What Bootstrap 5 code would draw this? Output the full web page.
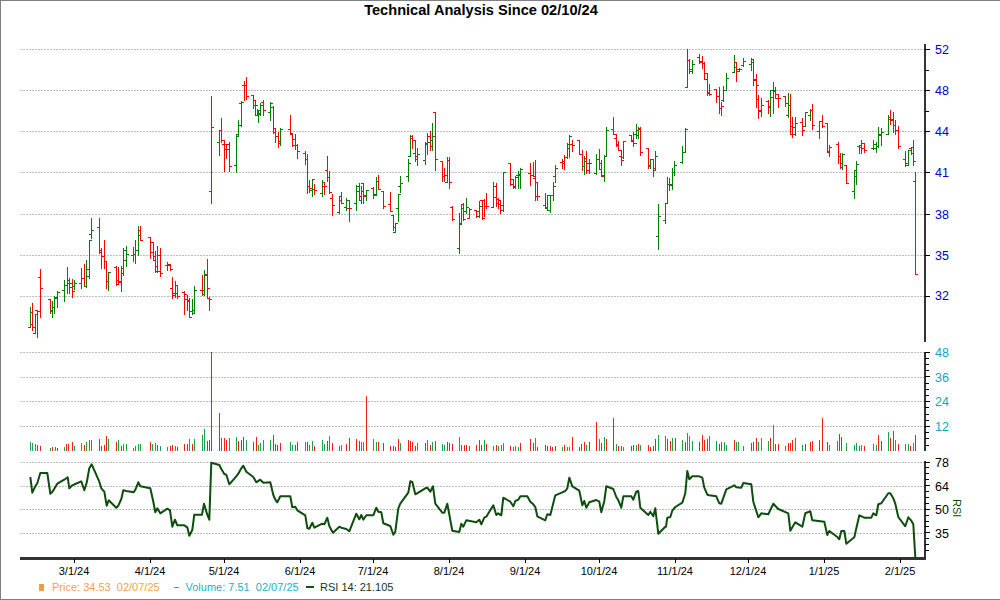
<!DOCTYPE html>
<html lang="en">
<head>
    <meta charset="UTF-8">
    <meta name="viewport" content="width=device-width, initial-scale=1.0">
    <title>Technical Analysis</title>
    <link href="https://cdn.jsdelivr.net/npm/bootstrap@5.3.0/dist/css/bootstrap.min.css" rel="stylesheet">
    <style>
        body {
            background-color: #fff;
            font-family: "Liberation Sans", Arial, sans-serif;
            overflow: hidden;
        }
        .chart-frame {
            width: 1000px;
            height: 600px;
            box-shadow: inset 1px 1px 0 #808080, inset 0 -1px 0 #808080;
        }
        .chart-title {
            height: 20px;
            line-height: 21px;
            font-size: 14.6px;
            color: #000;
            padding-right: 38px;
        }
        .chart-svg {
            display: block;
            width: 1000px;
            height: 560px;
        }
        .chart-svg text {
            font-family: "Liberation Sans", Arial, sans-serif;
        }
        .grid-line {
            stroke: #bdbdbd;
            stroke-width: 1;
            stroke-dasharray: 2 1;
        }
        .axis-bar {
            stroke: #333;
            stroke-width: 2.4;
        }
        .axis-tick {
            stroke: #000;
            stroke-width: 1;
        }
        .lbl-price { font-size: 12.5px; fill: #0000c8; }
        .lbl-vol { font-size: 12.5px; fill: #12a6bb; }
        .lbl-rsi { font-size: 12.5px; fill: #000; }
        .lbl-date { font-size: 11px; fill: #000; }
        .lbl-side { font-size: 11px; fill: #0d4d0d; }
        .legend-row {
            font-size: 11px;
            height: 14px;
            padding-left: 39px;
            white-space: pre;
        }
        .legend-price { color: #f5a14e; width: 121.5px; }
        .legend-vol { color: #17b3c4; width: 120.5px; }
        .legend-rsi { color: #12391a; }
        .swatch-price { width: 5px; height: 7px; background: #f59b37; margin-right: 8px; }
        .swatch-vol { width: 5px; height: 1px; background: #17b3c4; margin-right: 7px; }
        .swatch-rsi { width: 8px; height: 2px; background: #12501a; margin-right: 6px; }
    </style>
</head>
<body class="m-0">
    <div class="chart-frame d-flex flex-column">
        <div class="chart-title fw-bold text-center">Technical Analysis Since 02/10/24</div>
        <svg class="chart-svg" viewBox="0 20 1000 560" id="chart" shape-rendering="crispEdges">
            <g id="grid"></g>
            <g id="bars"></g>
            <g id="vols"></g>
            <polyline id="rsi" fill="none" stroke="#0d4d0d" stroke-width="2" stroke-linejoin="round" shape-rendering="auto" clip-path="url(#rsiClip)"></polyline>
            <clipPath id="rsiClip"><rect x="20" y="455" width="905" height="103"></rect></clipPath>
            <g id="axes"></g>

            <text class="lbl-price" x="935" y="54">52</text>
            <text class="lbl-price" x="935" y="95">48</text>
            <text class="lbl-price" x="935" y="136">44</text>
            <text class="lbl-price" x="935" y="177">41</text>
            <text class="lbl-price" x="935" y="219">38</text>
            <text class="lbl-price" x="935" y="260">35</text>
            <text class="lbl-price" x="935" y="300">32</text>

            <text class="lbl-vol" x="935" y="357">48</text>
            <text class="lbl-vol" x="935" y="382">36</text>
            <text class="lbl-vol" x="935" y="406">24</text>
            <text class="lbl-vol" x="935" y="431">12</text>

            <text class="lbl-rsi" x="935" y="467">78</text>
            <text class="lbl-rsi" x="935" y="491">64</text>
            <text class="lbl-rsi" x="935" y="514">50</text>
            <text class="lbl-rsi" x="935" y="538">35</text>
            <text class="lbl-side" transform="translate(953,499) rotate(90)">RSI</text>

            <text class="lbl-date" x="74" y="575" text-anchor="middle">3/1/24</text>
            <text class="lbl-date" x="150" y="575" text-anchor="middle">4/1/24</text>
            <text class="lbl-date" x="224" y="575" text-anchor="middle">5/1/24</text>
            <text class="lbl-date" x="300" y="575" text-anchor="middle">6/1/24</text>
            <text class="lbl-date" x="373" y="575" text-anchor="middle">7/1/24</text>
            <text class="lbl-date" x="449" y="575" text-anchor="middle">8/1/24</text>
            <text class="lbl-date" x="525" y="575" text-anchor="middle">9/1/24</text>
            <text class="lbl-date" x="599" y="575" text-anchor="middle">10/1/24</text>
            <text class="lbl-date" x="675" y="575" text-anchor="middle">11/1/24</text>
            <text class="lbl-date" x="748" y="575" text-anchor="middle">12/1/24</text>
            <text class="lbl-date" x="824" y="575" text-anchor="middle">1/1/25</text>
            <text class="lbl-date" x="900" y="575" text-anchor="middle">2/1/25</text>
        </svg>
        <div class="legend-row d-flex align-items-center">
            <span class="swatch-price"></span><span class="legend-price">Price: 34.53  02/07/25</span>
            <span class="swatch-vol"></span><span class="legend-vol">Volume: 7.51  02/07/25</span>
            <span class="swatch-rsi"></span><span class="legend-rsi">RSI 14: 21.105</span>
        </div>
    </div>

    <script>
        // all numbers below are read off the picture at 3x: x high low open close
        var priceData = [[0, `
g 91 922 983 983 937;r 98 910 992 973 983;g 106 943 1000 1000 943;r 113 931 1013 931 935;r 121 808 952 832 865
r 151 898 940 898 935;g 157 905 952 932 923;g 163 890 940 923 893;g 172 875 923 895 877
g 193 840 905 871 855;g 202 801 880 855 840;r 209 835 880 850 862;r 217 838 893 850 875;g 224 840 868 858 850
g 244 805 866 850 835;r 253 793 858 835 860;g 260 781 862 860 829;g 268 721 835 808 721;g 275 655 716 703 691
r 298 655 760 683 757;r 304 745 806 752 770;r 313 721 805 770 785;r 320 785 866 785 845;g 326 818 872 845 818
r 349 800 856 802 852;r 355 802 852 840 847;g 364 800 875 845 805;g 370 745 825 820 752;g 379 740 800 780 763
g 401 742 785 765 763;g 407 722 790 763 750;g 415 679 766 750 705;r 421 679 720 690 720
r 451 712 775 712 758;r 460 727 782 727 770;r 466 755 816 780 814;r 472 740 818 798 815;r 480 745 828 767 820
r 502 787 812 795 797;r 510 793 812 793 807;r 517 832 896 865 880;g 525 845 893 885 856;r 532 858 896 880 890
r 553 875 942 878 883;r 562 885 930 897 900;r 568 895 952 905 952;g 577 898 942 935 940;g 583 858 940 932 871
r 606 826 885 871 871;g 612 810 885 883 825;r 622 778 893 823 865;r 628 893 930 895 898;g 634 289 611 574 382
g 658 390 465 427 392;r 664 355 428 390 422;r 673 422 514 433 433;r 679 433 476 448 448;r 688 428 515 433 498
g 709 403 518 496 408;g 716 361 406 403 377;g 725 303 378 311 308;r 733 245 300 255 255;r 739 232 298 255 289
r 760 286 326 286 316;r 767 300 346 300 316;r 772 328 346 345 343;g 775 330 368 345 332;g 781 310 346 340 316;r 790 302 347 308 331
g 811 307 362 337 310;r 820 319 400 323 385;r 826 385 428 397 408;r 835 397 443 408 425;g 841 385 436 430 388
r 871 346 403 387 400;r 877 400 440 403 418;r 886 403 447 435 436;r 892 433 476 436 454
r 916 455 493 460 478;r 922 463 581 478 560;r 928 540 578 560 564;g 937 538 590 570 538;r 943 553 583 567 571
g 967 541 590 580 547;r 973 548 582 558 558;r 982 468 545 511 532;r 988 515 580 532 576;r 997 582 647 595 616`],
        [999, `
g 19 588 640 638 590;r 25 576 610 600 610;g 40 595 630 622 600;r 49 600 665 625 625
g 70 557 630 610 558;r 79 550 600 573 590;g 85 560 610 600 575;r 91 550 610 550 590;g 100 570 600 585 571
r 121 563 596 565 585;g 130 532 585 583 545;r 136 526 568 543 568;r 151 574 625 574 620
r 172 577 635 612 634;r 181 645 690 645 683;g 187 670 697 697 670;g 196 582 665 625 583;g 202 530 578 558 550
g 226 477 545 530 490;g 232 405 470 470 408;r 238 405 445 415 420;r 247 420 485 460 468;g 253 445 497 478 463
g 277 427 493 480 430;g 283 400 463 432 427;r 292 393 450 410 438;g 298 370 450 420 408;r 307 337 510 337 478
r 328 484 545 484 528;r 334 505 545 528 525;g 343 472 548 547 480;r 349 472 566 480 547
r 358 620 660 622 658;g 379 640 760 745 672;g 385 617 672 670 625;r 391 610 660 612 658;g 400 595 640 635 623;r 409 625 656 655 628
r 430 630 652 632 635;g 439 604 652 650 620;r 448 600 658 602 655;r 454 597 650 600 620;r 460 580 625 620 620
g 481 548 622 622 558;r 490 550 618 592 610;r 496 596 625 598 612;r 502 600 640 602 616;g 511 517 635 632 517
r 532 490 555 490 538;r 541 538 565 553 560;g 547 530 565 562 532;g 556 513 566 525 522;g 562 505 565 525 507
r 592 490 556 520 525;r 601 487 530 525 528;r 607 480 600 535 548;r 613 548 602 590 590
r 637 580 625 615 622;g 643 585 630 625 587;g 652 585 638 630 587;g 661 547 600 587 560;g 667 497 548 530 505
r 688 478 505 488 490;r 694 467 508 485 472;g 703 430 475 472 432;g 709 407 472 445 408;r 718 421 455 433 436
r 739 420 463 421 462;r 748 450 510 463 498;g 754 470 522 500 483;r 760 455 520 476 510;r 769 477 520 490 490
g 790 463 522 520 477;r 799 448 505 478 490;r 805 480 530 508 528;g 814 467 545 527 468;g 820 382 468 468 390
r 841 352 403 388 403;r 850 403 440 415 433;r 856 425 452 435 452;r 865 450 497 468 481;g 871 423 475 473 423
r 895 407 425 407 420;g 901 397 440 423 403;g 910 373 415 430 390;g 916 383 416 405 388;r 922 382 466 384 457
r 946 445 504 445 500;g 952 478 505 497 479;r 961 477 530 478 505;g 967 453 512 510 468
g 976 614 749 709 648;g 997 610 670 662 610`],
        [1998, `
g 4 532 610 610 552;g 10 534 570 552 555;g 19 505 569 552 518;g 25 485 527 518 495;g 49 438 490 488 457;g 58 386 457 457 387
g 64 148 262 262 180;r 70 178 220 180 215;g 79 180 220 208 192
r 100 163 190 173 183;r 109 170 205 187 190;r 115 188 238 190 220;r 124 220 287 238 280;r 130 252 287 278 284
r 151 267 307 268 288;r 160 262 340 288 325;r 166 307 345 325 319;g 172 258 303 302 270;g 181 220 272 270 234
g 205 167 217 217 203;r 211 187 245 187 213;r 220 205 215 207 208;g 232 175 200 197 185
g 256 175 212 192 187;r 262 178 255 178 240;r 271 224 323 238 255;r 277 285 355 298 332;g 286 295 350 333 315
r 307 302 340 303 320;g 313 270 350 322 292;g 322 247 341 270 270;r 328 263 295 274 282;r 337 282 323 295 295
r 358 288 320 288 310;g 367 280 352 347 315;r 373 284 402 315 402;r 379 352 413 380 382;g 388 352 405 402 370
r 409 355 407 368 392;g 418 337 380 378 338;g 433 328 362 347 332;r 439 313 388 330 376
g 460 365 415 393 365;r 469 347 382 364 380;r 484 370 457 370 457;r 490 435 470 455 441
r 517 427 490 432 468;r 523 460 505 470 490;g 529 460 508 502 463;r 541 497 550 497 550
g 565 510 596 574 511;g 571 485 553 529 493;g 580 438 460 440 441;r 586 422 460 437 430;r 595 430 458 445 452
g 622 420 447 445 433;g 631 428 458 445 440;g 637 382 442 440 403;g 646 385 437 405 397
g 667 345 403 402 352;r 673 330 372 357 357;r 682 337 398 360 375;r 688 360 403 376 391;r 697 378 445 390 439
r 718 453 500 478 490;g 727 450 497 495 452;r 736 441 463 445 461;r 742 421 497 441 484;r 748 517 823 544 823`]];

        // x and top of the volume bar, base sits at 318 in the same crop
        var volData = [[0, `
g91 292;g97 294;g106 298;r112 302;r121 304;g151 310;r157 306;g166 307;r172 310
g193 307;r199 298;r205 297;r217 292;g223 304;g244 295;r253 300;g260 293;g268 285;g275 287
r298 282;r304 303;r313 301;r320 273;g326 282;r349 292;g355 286;r364 303;g370 299;g379 298
g401 310;g407 304;g415 298;g421 298;r451 292;g457 298;g466 295;r472 302;g481 304
g502 308;r510 305;r517 301;g525 303;r532 306;r553 298;r562 298;g568 283;r577 297;g583 282
g606 270;g612 253;r622 288;r628 285;r634 22;r658 205;r664 280;r673 280;r679 285;g688 280
g709 278;r715 288;r724 285;r730 276;g739 286;r760 292;r769 277;g775 300;g781 295;g790 286
g811 286;r820 271;r826 298;r832 300;r841 295;g871 292;g877 302;r886 300;r892 292
g916 292;r922 292;g928 300;g937 289;r943 304;g967 286;g973 298;r982 289;g988 274;r997 296`],
        [999, `
r19 303;g25 301;r40 298;r49 280;r70 283;r79 288;g85 291;g91 292;r100 154
g121 282;g130 291;r136 293;r151 295;r172 304;r181 305;r187 307;r196 282;g202 295
r226 286;r232 290;r238 291;r247 303;g253 295;r277 295;g283 286;r292 302;g298 291;r307 289
g328 298;g334 300;r343 292;r349 294;r358 297;g379 277;r385 300;r394 301;r400 302;r409 304
r430 302;r439 286;r445 302;g454 286;r460 297;g481 304;r490 301;g496 305;g505 301;g511 295
r532 304;g541 306;g547 304;g556 306;r562 295;r592 282;r601 295;g607 280;r613 306
r637 301;r643 305;r652 304;r658 306;r667 303;g688 306;r694 301;g703 306;g709 306;r718 277
r739 306;r745 298;r754 292;g760 301;r769 291;r790 232;g799 282;r805 295;g814 277;r820 282
r841 220;g850 298;r856 303;r865 305;g871 306;r895 303;r901 301;g910 300;r916 298;g922 300
r946 301;r952 306;r961 303;r967 283;g976 271;g997 274`],
        [1998, `
r4 283;r13 288;g19 279;r28 281;g49 285;r58 291;g64 265;g70 274;g79 289
r100 291;r109 271;r115 286;r124 284;g130 274;g151 289;r160 297;r166 293;g175 292;g181 300
r205 286;g211 292;g217 292;g232 304;r256 295;r262 292;r271 280;g277 292;g286 280
g307 289;r313 280;g322 241;r328 298;r337 298;g358 304;r367 295;r373 295;r379 287;g388 280
g409 301;r418 298;r433 292;r439 289;r460 286;r469 220;r484 292;g490 301
g514 289;r520 268;r526 277;g541 295;g565 300;g571 295;r580 303;g586 301;r595 304
g622 298;g631 301;r637 271;r646 289;g667 262;r673 280;r682 259;g688 286;r697 298
g718 298;g727 298;r733 304;g742 295;r748 271`]];

        var rsiData = [[0, `91 396 97 443 106 424 112 415 121 384 142 384 151 446 157 441 172 416 193 404 203 397 208 430 217 421 226 417 244 409 253 436 260 413 268 370 275 358 298 410 304 430 313 440 320 482 326 466 349 488 355 482 364 462 370 436 379 438 401 442 407 432 415 412 421 424 451 430 460 470 466 502 472 490 481 505 502 491 510 496 517 545 525 524 532 541 553 541 562 547 568 572 577 555 583 509 606 509 612 476 622 509 628 524 634 353 658 360 664 372 673 387 679 389 688 418 709 394 715 386 724 370 730 362 739 380 760 396 769 412 781 404 790 413 811 412 820 450 826 464 832 472 841 454 871 454 877 487 886 485 892 496 916 511 922 549 928 551 937 533 943 548 967 536 973 538 982 518 988 543 997 560`],
        [999, `0 563 19 545 25 548 40 552 49 559 70 506 79 523 85 510 91 524 100 511 121 511 130 488 136 500 145 502 151 535 172 543 181 569 187 560 196 490 202 476 226 443 232 409 238 411 247 448 277 430 283 428 292 440 300 424 307 476 328 503 334 503 343 476 358 557 379 561 385 536 391 545 400 526 430 532 439 524 445 538 454 518 460 515 481 481 490 510 496 505 505 511 511 458 532 470 541 484 547 468 556 464 562 454 583 454 592 470 601 478 607 486 613 514 637 526 643 508 652 510 667 451 688 442 697 438 703 430 709 398 718 424 739 437 748 481 754 468 760 488 769 472 790 465 799 470 805 502 814 468 820 424 841 432 850 456 856 466 865 488 871 454 895 454 901 464 910 440 916 438 922 488 946 510 952 500 961 514 967 490 976 566 997 545`],
        [1998, `0 545 4 518 13 516 19 497 28 486 49 473 58 445 64 378 70 403 79 394 100 394 109 398 115 428 124 449 130 451 151 454 160 475 166 476 181 433 205 421 211 427 226 428 232 414 256 418 262 470 277 517 286 505 307 508 322 476 337 492 367 505 373 557 388 532 409 545 418 505 433 499 439 526 475 530 484 570 490 558 514 576 520 583 526 558 535 558 541 596 565 577 580 511 595 518 616 518 622 505 631 511 637 478 646 475 667 445 673 445 682 460 688 476 697 516 718 544 727 517 736 527 742 538 748 638`]];

        function px(v) {
            return Math.floor(v / 3) + 0.5;
        }

        function line(x1, y1, x2, y2, attrs) {
            return '<line x1="' + x1 + '" y1="' + y1 + '" x2="' + x2 + '" y2="' + y2 + '" ' + attrs + '/>';
        }

        // price bars
        var out = '';
        priceData.forEach(function (seg) {
            seg[1].trim().split(/[;\n]+/).forEach(function (row) {
                var p = row.trim().split(' ');
                var col = p[0] == 'g' ? '#008000' : '#ff0000';
                var x = px(+p[1] + seg[0]);
                var attrs = 'stroke="' + col + '"';
                out += line(x, Math.floor(p[2] / 3), x, Math.floor(p[3] / 3) + 1, attrs);
                out += line(x - 2.5, px(+p[4]), x, px(+p[4]), attrs);
                out += line(x, px(+p[5]), x + 2.5, px(+p[5]), attrs);
            });
        });
        document.getElementById('bars').innerHTML = out;

        // volume, crop starts at y=345
        out = '';
        volData.forEach(function (seg) {
            seg[1].trim().split(/[;\n]+/).forEach(function (row) {
                var p = row.trim().split(' ');
                var col = p[0][0] == 'g' ? '#1ba34a' : '#f5200f';
                var x = px(+p[0].slice(1) + seg[0]);
                out += line(x, 345 + Math.floor(p[1] / 3), x, 451, 'stroke="' + col + '"');
            });
        });
        document.getElementById('vols').innerHTML = out;

        // rsi line
        var pts = [];
        rsiData.forEach(function (seg) {
            var n = seg[1].split(' ');
            for (var i = 0; i < n.length; i += 2) {
                pts.push(((+n[i] + seg[0]) / 3).toFixed(1) + ',' + (345 + n[i + 1] / 3).toFixed(1));
            }
        });
        document.getElementById('rsi').setAttribute('points', pts.join(' '));

        // grid lines
        out = '';
        [49.5, 90.5, 131.5, 172.5, 214.5, 255.5, 296.5, 377.5, 401.5, 426.5, 352.5, 462.5, 486.5, 509.5, 533.5].forEach(function (y) {
            out += line(20, y, 924, y, 'class="grid-line"');
        });
        document.getElementById('grid').innerHTML = out;

        // axes and their ticks
        out = '';
        out += line(925, 44, 925, 342, 'class="axis-bar"');
        out += line(925, 352, 925, 451, 'class="axis-bar"');
        out += line(925, 461, 925, 559, 'class="axis-bar"');
        out += line(20, 558.5, 926, 558.5, 'class="axis-bar"');
        [49.5, 90.5, 131.5, 172.5, 214.5, 255.5, 296.5].forEach(function (y) {
            out += line(925, y, 930, y, 'class="axis-tick"');
        });
        [70.5, 111.5].forEach(function (y) {
            out += line(925, y, 929, y, 'class="axis-tick"');
        });
        for (var i = 0; i < 16; i++) {
            var vy = Math.floor(352 + i * 6.2) + 0.5;
            out += line(925, vy, i % 4 == 0 ? 930 : 929, vy, 'class="axis-tick"');
        }
        for (var j = 0; j < 16; j++) {
            var ry = Math.floor(462 + j * 5.9) + 0.5;
            out += line(925, ry, j % 4 == 0 ? 930 : 929, ry, 'class="axis-tick"');
        }
        [74.5, 150.5, 224.5, 300.5, 373.5, 449.5, 525.5, 599.5, 675.5, 748.5, 824.5, 900.5].forEach(function (x) {
            out += line(x, 559, x, 563, 'class="axis-tick"');
        });
        document.getElementById('axes').innerHTML = out;
    </script>

    <script src="https://cdn.jsdelivr.net/npm/bootstrap@5.3.0/dist/js/bootstrap.bundle.min.js"></script>
</body>
</html>
